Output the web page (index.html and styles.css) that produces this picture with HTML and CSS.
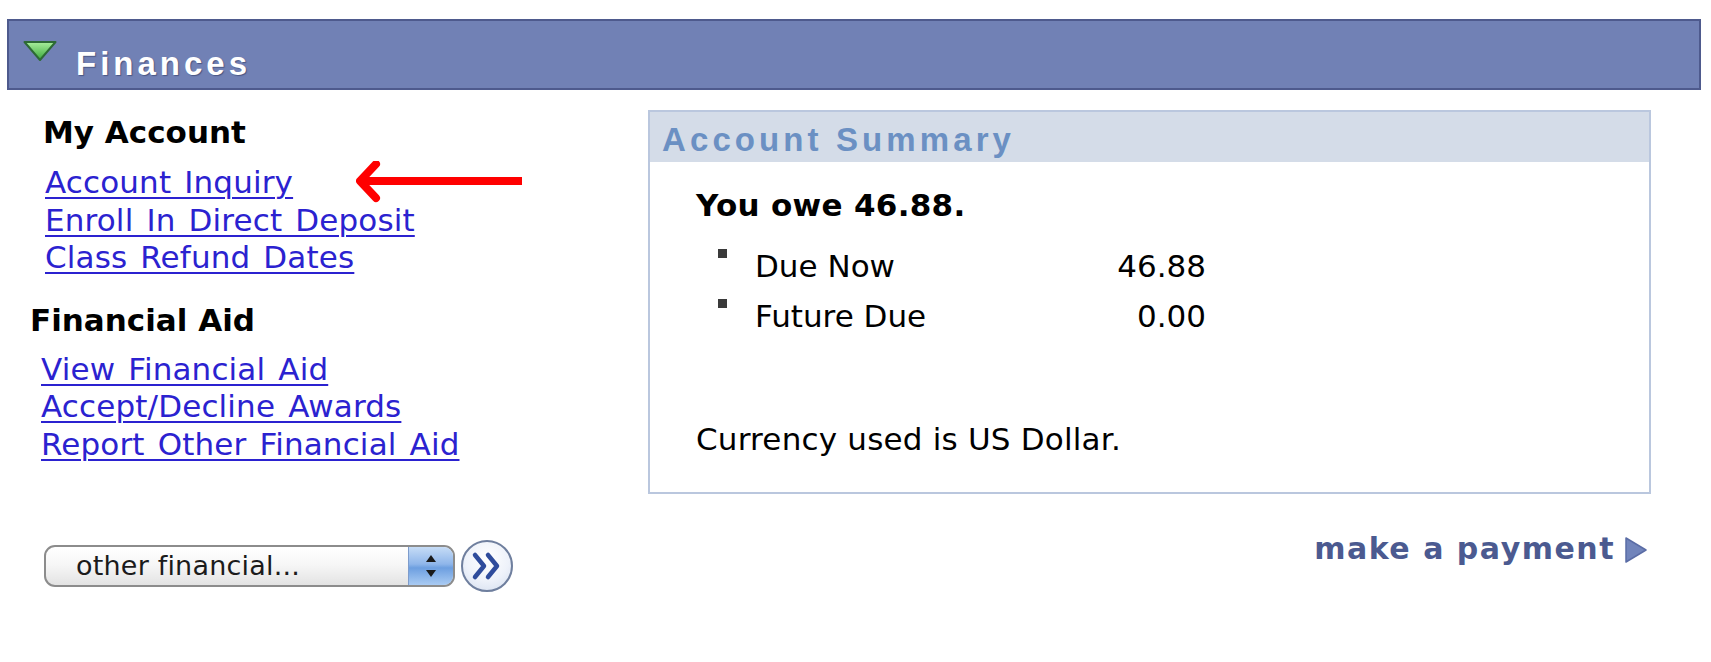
FILE: index.html
```html
<!DOCTYPE html>
<html lang="en">
<head>
<meta charset="utf-8">
<title>Finances</title>
<link rel="stylesheet" href="styles.css">
</head>
<body>
<div class="page">
  <div class="section-header">
    <svg class="collapse-icon" width="36" height="22" viewBox="0 0 36 22">
      <defs>
        <linearGradient id="tg" x1="0" y1="0" x2="0" y2="1">
          <stop offset="0" stop-color="#a8ee9c"/>
          <stop offset="1" stop-color="#3aa83a"/>
        </linearGradient>
      </defs>
      <path d="M2.5 2 L33.5 2 L18 20 Z" fill="url(#tg)" stroke="#2d6a35" stroke-width="2" stroke-linejoin="round"/>
    </svg>
    <span class="section-title">Finances</span>
  </div>

  <div class="content">
    <div class="left-col">
      <div class="group group-account">
        <h3 class="group-title">My Account</h3>
        <ul class="links">
          <li class="arrow-item"><a href="#">Account Inquiry</a>
            <svg class="red-arrow" width="170" height="42" viewBox="0 0 170 42">
              <path d="M4 20 L166 20" stroke="#ff0000" stroke-width="8" fill="none"/>
              <path d="M20 3 L4 20 L20 37" stroke="#ff0000" stroke-width="8" fill="none" stroke-linejoin="round" stroke-linecap="round"/>
            </svg>
          </li>
          <li><a href="#">Enroll In Direct Deposit</a></li>
          <li><a href="#">Class Refund Dates</a></li>
        </ul>
      </div>
      <div class="group group-aid">
        <h3 class="group-title">Financial Aid</h3>
        <ul class="links links-aid">
          <li><a href="#">View Financial Aid</a></li>
          <li><a href="#">Accept/Decline Awards</a></li>
          <li><a href="#">Report Other Financial Aid</a></li>
        </ul>
      </div>
      <div class="nav-row">
        <div class="select-box">
          <span class="select-text">other financial...</span>
          <span class="stepper">
            <svg width="14" height="26" viewBox="0 0 14 26">
              <path d="M7 2 L12 9 L2 9 Z" fill="#1a1a1a"/>
              <path d="M7 24 L12 17 L2 17 Z" fill="#1a1a1a"/>
            </svg>
          </span>
        </div>
        <button class="go-btn" type="button" aria-label="Go">
          <svg width="34" height="30" viewBox="0 0 34 30">
            <path d="M5 4 L14 15 L5 26" stroke="#2f4c9c" stroke-width="4.5" fill="none" stroke-linejoin="round" stroke-linecap="round"/>
            <path d="M18 4 L27 15 L18 26" stroke="#2f4c9c" stroke-width="4.5" fill="none" stroke-linejoin="round" stroke-linecap="round"/>
          </svg>
        </button>
      </div>
    </div>

    <div class="right-col">
      <div class="summary-box">
        <div class="summary-title">Account Summary</div>
        <div class="summary-body">
          <div class="owe">You owe 46.88.</div>
          <ul class="due-list">
            <li><span class="bullet"></span><span class="due-label">Due Now</span><span class="due-amt">46.88</span></li>
            <li><span class="bullet"></span><span class="due-label">Future Due</span><span class="due-amt">0.00</span></li>
          </ul>
          <p class="currency">Currency used is US Dollar.</p>
        </div>
      </div>
      <div class="payment-row">
        <a href="#" class="payment-link">make a payment</a>
        <svg class="payment-arrow" width="24" height="28" viewBox="0 0 24 28">
          <path d="M2 2 L22 14 L2 26 Z" fill="#7184bb" stroke="#5a6ca5" stroke-width="1.5" stroke-linejoin="round"/>
        </svg>
      </div>
    </div>
  </div>
</div>
</body>
</html>
```

FILE: styles.css
```css
html, body {
  margin: 0;
  padding: 0;
  background: #ffffff;
}

body {
  font-family: "DejaVu Sans", Verdana, sans-serif;
  color: #000;
}

.page {
  width: 1711px;
  height: 662px;
  padding-top: 19px;
  box-sizing: border-box;
}

.section-header {
  margin-left: 7px;
  width: 1694px;
  height: 71px;
  box-sizing: border-box;
  background: #7181b5;
  border: 2px solid #4e5a8d;
  display: flex;
  align-items: flex-start;
  padding: 18px 0 0 13px;
}

.collapse-icon {
  margin-top: 1px;
  flex: none;
}

.section-title {
  margin-left: 18px;
  font-family: "Liberation Sans", Arial, sans-serif;
  font-weight: bold;
  font-size: 33px;
  line-height: 49px;
  letter-spacing: 4px;
  color: #ffffff;
  text-shadow: 1px 1px 1px rgba(40, 50, 90, 0.55);
}

.content {
  display: flex;
  align-items: flex-start;
}

.left-col {
  width: 648px;
  flex: none;
  padding-top: 23px;
}

.group-title {
  margin: 0;
  font-size: 31px;
  line-height: 38px;
  font-weight: bold;
}

.group-account .group-title {
  padding-left: 43px;
}

.group-aid {
  margin-top: 24px;
}

.group-aid .group-title {
  padding-left: 30px;
}

.links {
  list-style: none;
  margin: 13px 0 0 0;
  padding: 0 0 0 45px;
}

.links-aid {
  padding-left: 41px;
  margin-top: 12px;
}

.links li {
  font-size: 31px;
  line-height: 37.6px;
  word-spacing: 3px;
  letter-spacing: 0.15px;
}

.links a {
  color: #2b22d0;
  text-decoration: underline;
  text-decoration-thickness: 2px;
  text-underline-offset: 4px;
}

.arrow-item {
  position: relative;
}

.red-arrow {
  position: absolute;
  left: 311px;
  top: -3px;
}

.nav-row {
  display: flex;
  align-items: center;
  margin-top: 76px;
  padding-left: 44px;
}

.select-box {
  width: 411px;
  height: 42px;
  box-sizing: border-box;
  border: 2px solid #8c8c8c;
  border-radius: 11px;
  background: linear-gradient(#ffffff 0%, #f7f7f7 45%, #e3e3e3 100%);
  display: flex;
  align-items: center;
  overflow: hidden;
}

.select-text {
  flex: 1;
  padding-left: 30px;
  font-size: 27px;
  line-height: 38px;
  letter-spacing: 0.2px;
  color: #1b1b1b;
}

.stepper {
  width: 44px;
  height: 100%;
  display: flex;
  align-items: center;
  justify-content: center;
  background: linear-gradient(#c6dcf6 0%, #8fb6ea 45%, #6d9fe0 55%, #a9cbf3 100%);
  border-left: 1px solid #7e9ccc;
}

.go-btn {
  width: 52px;
  height: 52px;
  margin-left: 6px;
  padding: 0;
  border: 2px solid #6f7f9e;
  border-radius: 50%;
  background: radial-gradient(circle at 50% 35%, #ffffff 0%, #eef2fa 55%, #d3ddee 100%);
  display: flex;
  align-items: center;
  justify-content: center;
}

.right-col {
  width: 1003px;
  flex: none;
  padding-top: 20px;
}

.summary-box {
  border: 2px solid #bac7de;
}

.summary-title {
  background: #d4dce8;
  height: 44px;
  padding: 6px 0 0 12px;
  font-family: "Liberation Sans", Arial, sans-serif;
  font-weight: bold;
  font-size: 33px;
  line-height: 44px;
  letter-spacing: 4.1px;
  color: #6b90c3;
}

.summary-body {
  padding: 24px 0 34px 46px;
}

.owe {
  font-weight: bold;
  font-size: 31px;
  line-height: 38px;
  letter-spacing: 0.3px;
}

.due-list {
  list-style: none;
  margin: 17px 0 0 0;
  padding: 0 0 0 22px;
}

.due-list li {
  display: grid;
  grid-template-columns: 37px 1fr auto;
  width: 488px;
  font-size: 31px;
  line-height: 50px;
}

.bullet {
  width: 9px;
  height: 9px;
  background: #3a3a3a;
  margin-top: 8px;
}

.due-amt {
  text-align: right;
}

.currency {
  margin: 79px 0 0 0;
  font-size: 31px;
  line-height: 38px;
  letter-spacing: 0.2px;
}

.payment-row {
  display: flex;
  justify-content: flex-end;
  align-items: center;
  margin-top: 36px;
  padding-right: 3px;
}

.payment-link {
  font-weight: bold;
  font-size: 30px;
  line-height: 38px;
  letter-spacing: 1.5px;
  color: #4b5a90;
  text-decoration: none;
}

.payment-arrow {
  margin-left: 9px;
  margin-top: 2px;
}
```
